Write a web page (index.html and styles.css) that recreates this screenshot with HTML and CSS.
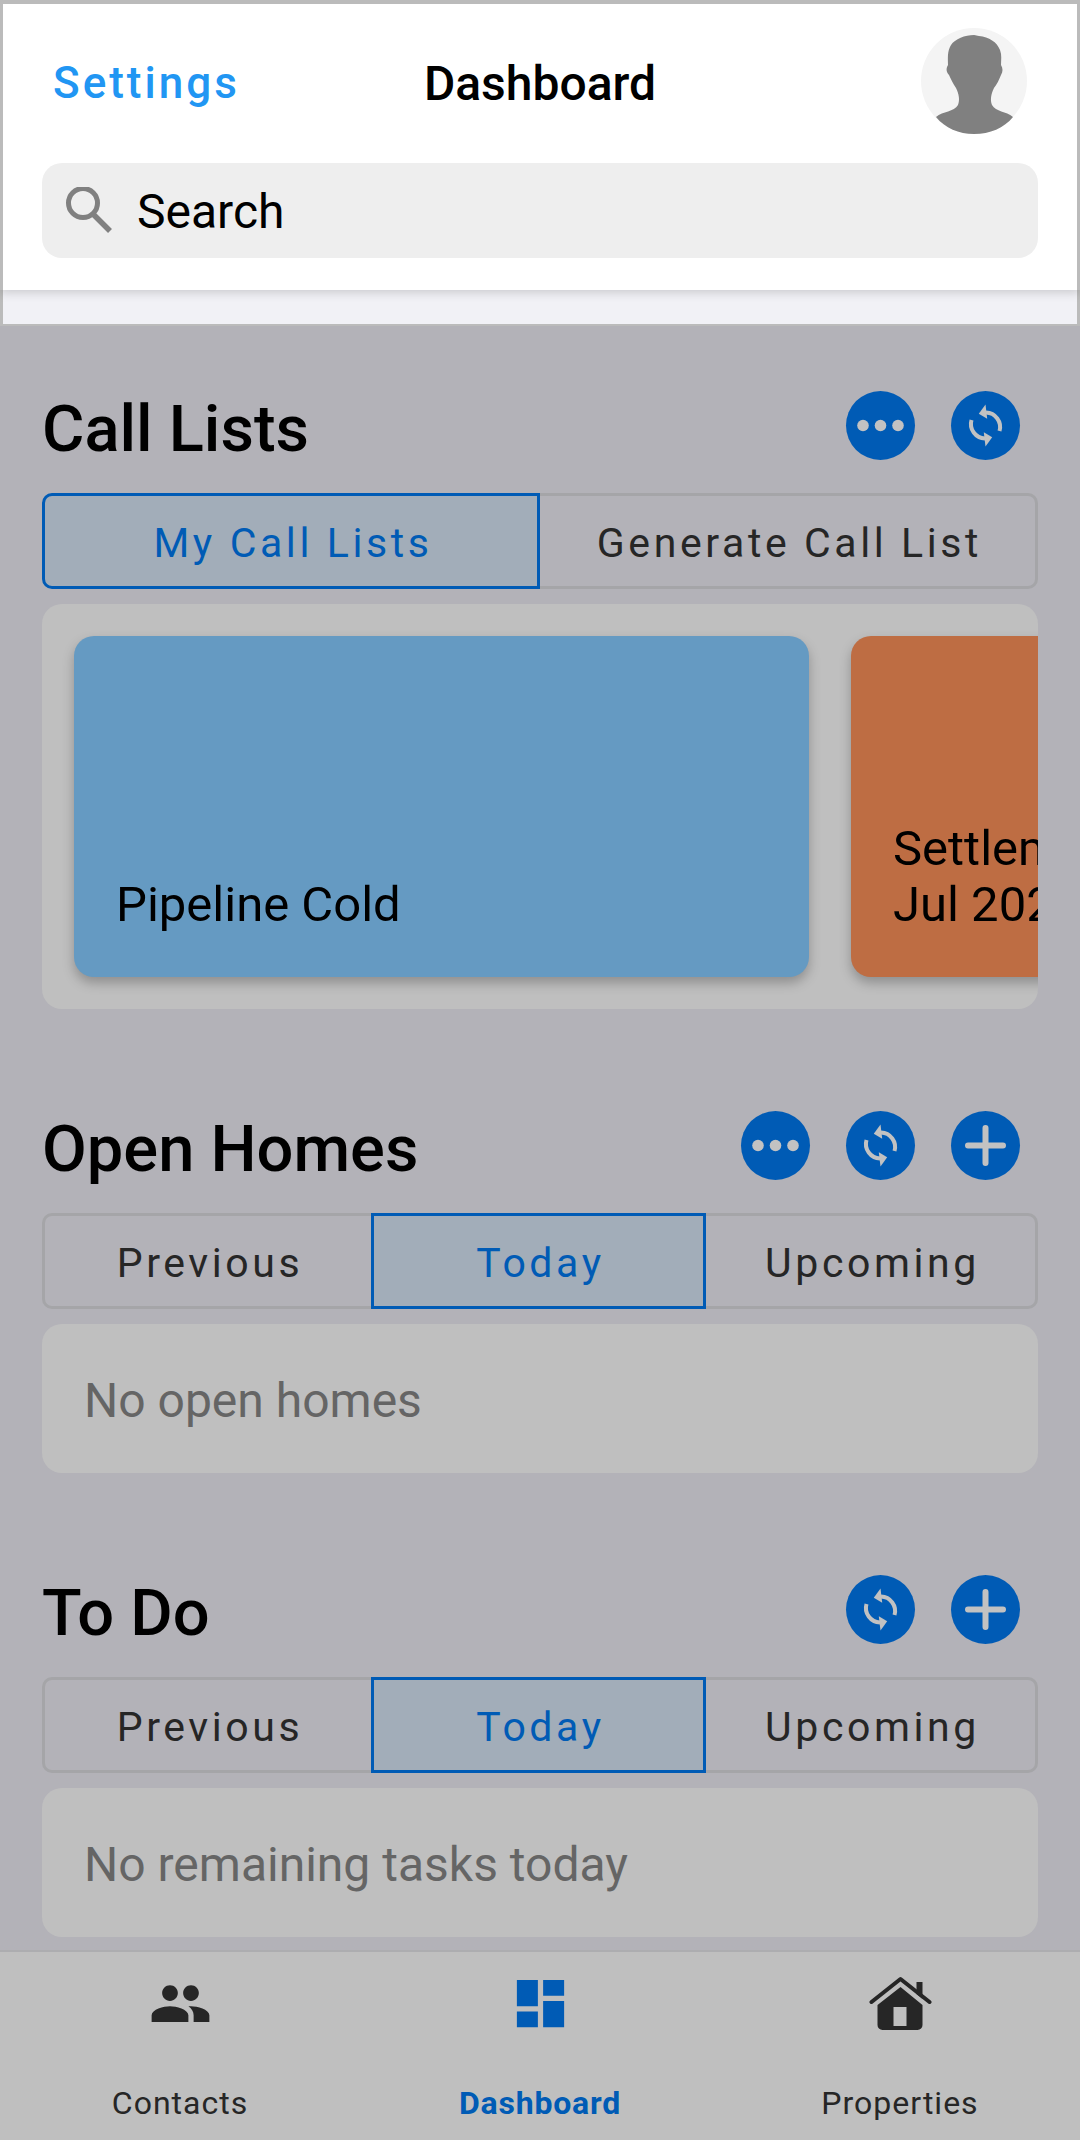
FILE: index.html
```html
<!DOCTYPE html>
<html lang="en">
<head>
    <meta charset="UTF-8">
    <meta name="viewport" content="width=device-width, initial-scale=1.0">
    <title>Dashboard</title>
    <link rel="stylesheet" href="styles.css">
</head>
<body>
    <div class="app">
        <header class="top-bar">
            <div class="top-row">
                <span class="settings-link">Settings</span>
                <h1 class="page-title">Dashboard</h1>
                <div class="avatar">
                    <svg viewBox="0 0 106 106" width="106" height="106">
                        <circle cx="53" cy="53" r="53" fill="#f4f4f4"/>
                        <path d="M15 89C22 83 33 84 37 77C39 72 38 66 35 60C32 56 30 51 28 47C25 44 25 40 27 37C27 30 26 24 30 17C34 11 44 7 53 7C55 7 56 8 58 8C68 9 76 14 79 22C81 27 80 32 80 37C82 40 82 44 80 47C78 52 76 56 73 60C70 66 69 72 71 77C75 84 85 83 92 89C83 100 69 106 53 106C38 106 24 100 15 89Z" fill="#808080"/>
                    </svg>
                </div>
            </div>
            <div class="search-box">
                <svg class="search-icon" viewBox="0 0 48 48" width="48" height="48">
                    <circle cx="18" cy="16" r="14.5" fill="none" stroke="#808080" stroke-width="5"/>
                    <path d="M28 27l17 17" stroke="#808080" stroke-width="5.500"/>
                </svg>
                <span>Search</span>
            </div>
        </header>
        <div class="top-band"></div>

        <main class="content">
            <section class="section">
                <div class="section-head">
                    <h2>Call Lists</h2>
                    <div class="actions">
                        <button class="round-btn"><svg viewBox="0 0 69 69"><use href="#i-more"/></svg></button>
                        <button class="round-btn"><svg viewBox="0 0 69 69"><use href="#i-sync"/></svg></button>
                    </div>
                </div>
                <div class="tabs">
                    <div class="tab active">My Call Lists</div>
                    <div class="tab">Generate Call List</div>
                </div>
                <div class="panel call-panel">
                    <div class="list-card blue"><span>Pipeline Cold</span></div>
                    <div class="list-card orange"><span>Settlements<br>Jul 2024</span></div>
                </div>
            </section>

            <section class="section">
                <div class="section-head">
                    <h2>Open Homes</h2>
                    <div class="actions">
                        <button class="round-btn"><svg viewBox="0 0 69 69"><use href="#i-more"/></svg></button>
                        <button class="round-btn"><svg viewBox="0 0 69 69"><use href="#i-sync"/></svg></button>
                        <button class="round-btn"><svg viewBox="0 0 69 69"><use href="#i-plus"/></svg></button>
                    </div>
                </div>
                <div class="tabs">
                    <div class="tab">Previous</div>
                    <div class="tab active">Today</div>
                    <div class="tab">Upcoming</div>
                </div>
                <div class="panel empty">No open homes</div>
            </section>

            <section class="section">
                <div class="section-head">
                    <h2>To Do</h2>
                    <div class="actions">
                        <button class="round-btn"><svg viewBox="0 0 69 69"><use href="#i-sync"/></svg></button>
                        <button class="round-btn"><svg viewBox="0 0 69 69"><use href="#i-plus"/></svg></button>
                    </div>
                </div>
                <div class="tabs">
                    <div class="tab">Previous</div>
                    <div class="tab active">Today</div>
                    <div class="tab">Upcoming</div>
                </div>
                <div class="panel empty">No remaining tasks today</div>
            </section>
        </main>

        <nav class="tab-bar">
            <div class="nav-item">
                <svg viewBox="0 0 24 24" width="63" height="63"><path fill="#262626" d="M16 11c1.66 0 2.99-1.34 2.99-3S17.66 5 16 5c-1.66 0-3 1.34-3 3s1.34 3 3 3zm-8 0c1.66 0 2.99-1.34 2.99-3S9.66 5 8 5C6.34 5 5 6.34 5 8s1.34 3 3 3zm0 2c-2.33 0-7 1.17-7 3.5V19h14v-2.5c0-2.33-4.67-3.5-7-3.5zm8 0c-.29 0-.62.02-.97.05 1.16.84 1.97 1.97 1.97 3.45V19h6v-2.5c0-2.33-4.67-3.5-7-3.5z"/></svg>
                <span>Contacts</span>
            </div>
            <div class="nav-item current">
                <svg viewBox="0 0 24 24" width="63" height="63"><path fill="#005bb5" d="M3 13h8V3H3v10zm0 8h8v-6H3v6zm10 0h8V11h-8v10zm0-18v6h8V3h-8z"/></svg>
                <span>Dashboard</span>
            </div>
            <div class="nav-item">
                <svg viewBox="8.500 2 63 63" width="63" height="63">
                    <path d="M11 32L40 9l29 23" fill="none" stroke="#262626" stroke-width="4" stroke-linecap="round" stroke-linejoin="round"/>
                    <path d="M56 12h6v17l-6-5z" fill="#262626"/>
                    <path fill-rule="evenodd" fill="#262626" d="M40 17L17 35v20a5 5 0 0 0 5 5h35a5 5 0 0 0 5-5V35zM33 37h13v19H33z"/>
                </svg>
                <span>Properties</span>
            </div>
        </nav>
    </div>

    <svg class="icon-defs" width="0" height="0">
        <defs>
            <g id="i-more" fill="#c2c2c2">
                <circle cx="17" cy="34.5" r="5.8"/>
                <circle cx="34.5" cy="34.5" r="5.8"/>
                <circle cx="52" cy="34.5" r="5.8"/>
            </g>
            <g id="i-sync" fill="#c2c2c2">
                <path d="M35 21.500A14.500 14.500 0 0 1 48.500 40" fill="none" stroke="#c2c2c2" stroke-width="4"/>
                <path d="M34.500 13.500L27.800 22.800L36.200 27.800z"/>
                <path d="M34 47.500A14.500 14.500 0 0 1 20.500 29" fill="none" stroke="#c2c2c2" stroke-width="4"/>
                <path d="M34.500 55.500L41.200 46.200L32.800 41.200z"/>
            </g>
            <path id="i-plus" d="M34.500 17v35M17 34.500h35" stroke="#c2c2c2" stroke-width="6" stroke-linecap="round"/>
        </defs>
    </svg>
</body>
</html>
```

FILE: styles.css
```css
* {
    margin: 0;
    padding: 0;
    box-sizing: border-box;
}

body {
    font-family: Roboto, "Liberation Sans", sans-serif;
    background: #b3b2b8;
}

.app {
    width: 1080px;
    height: 2140px;
    display: flex;
    flex-direction: column;
    overflow: hidden;
}

.top-bar {
    height: 290px;
    background: #fff;
    border: 3px solid #bbb;
    border-top-width: 4px;
    border-bottom: none;
    padding: 24px 39px 0;
    box-shadow: 0 2px 10px rgba(0, 0, 0, 0.18);
    position: relative;
}

.top-row {
    height: 106px;
    display: flex;
    align-items: center;
    position: relative;
}

.settings-link {
    padding-top: 4px;
    font-size: 44px;
    font-weight: 500;
    letter-spacing: 3px;
    color: #2196f3;
    margin-left: 11px;
}

.page-title {
    position: absolute;
    left: 0;
    right: 0;
    padding-top: 4px;
    text-align: center;
    font-size: 48px;
    font-weight: 500;
    color: #000;
}

.avatar {
    margin-left: auto;
    margin-right: 11px;
    height: 106px;
}

.search-box {
    height: 95px;
    margin-top: 29px;
    background: #eeeeee;
    border-radius: 20px;
    display: flex;
    align-items: center;
    padding-left: 23px;
    gap: 24px;
    font-size: 48px;
    color: #000;
}

.search-box span {
    padding-top: 2px;
}

.top-band {
    height: 36px;
    background: #f1f1f6;
    border: 3px solid #bbb;
    border-top: none;
    border-bottom-width: 2px;
}

.content {
    flex: 1;
    padding: 0 42px;
}

.section {
    padding-top: 102px;
}

.section:first-child {
    padding-top: 65px;
}

.section-head {
    height: 69px;
    display: flex;
    align-items: center;
    justify-content: space-between;
}

.section-head h2 {
    padding-top: 6px;
    font-size: 65px;
    font-weight: 500;
    color: #000;
}

.actions {
    display: flex;
    gap: 36px;
    margin-right: 18px;
}

.round-btn {
    width: 69px;
    height: 69px;
    border: none;
    border-radius: 50%;
    background: #005bb5;
}

.round-btn svg {
    display: block;
    width: 69px;
    height: 69px;
}

.tabs {
    margin-top: 33px;
    height: 96px;
    display: grid;
    grid-auto-flow: column;
    grid-auto-columns: 1fr;
}

.tab {
    display: flex;
    align-items: center;
    justify-content: center;
    padding: 4px 0 0 4px;
    font-size: 41px;
    letter-spacing: 3.6px;
    color: #262626;
    border: 3px solid #a5a5a8;
    border-left: none;
}

.tab:first-child {
    border-left: 3px solid #a5a5a8;
    border-radius: 10px 0 0 10px;
}

.tab:last-child {
    border-radius: 0 10px 10px 0;
}

.tab.active {
    color: #005bb5;
    background: #a2adb9;
    border: 3px solid #005bb5;
    margin-left: -3px;
}

.tab.active:first-child {
    margin-left: 0;
}

.panel {
    margin-top: 15px;
    background: #bfbfbf;
    border-radius: 20px;
}

.call-panel {
    height: 405px;
    padding: 32px;
    display: flex;
    gap: 42px;
    overflow: hidden;
}

.list-card {
    flex: 0 0 735px;
    height: 341px;
    border-radius: 20px;
    padding: 0 42px 44px;
    display: flex;
    align-items: flex-end;
    font-size: 49px;
    line-height: 56px;
    color: #000;
    box-shadow: 0 6px 12px rgba(0, 0, 0, 0.25);
    white-space: nowrap;
}

.blue {
    background: #659ac2;
}

.orange {
    background: #be6d43;
}

.empty {
    height: 149px;
    display: flex;
    align-items: center;
    padding: 3px 0 0 42px;
    font-size: 48px;
    color: #656565;
}

.tab-bar {
    height: 190px;
    background: #bfbfbf;
    border-top: 2px solid #adadb0;
    display: flex;
    justify-content: space-between;
    padding-top: 20px;
}

.nav-item {
    width: 360px;
    display: flex;
    flex-direction: column;
    align-items: center;
    gap: 49px;
    font-size: 32px;
    letter-spacing: 1px;
    color: #262626;
}

.nav-item.current {
    font-weight: 700;
    color: #005bb5;
    letter-spacing: 0.8px;
}

.icon-defs {
    position: absolute;
}
```
